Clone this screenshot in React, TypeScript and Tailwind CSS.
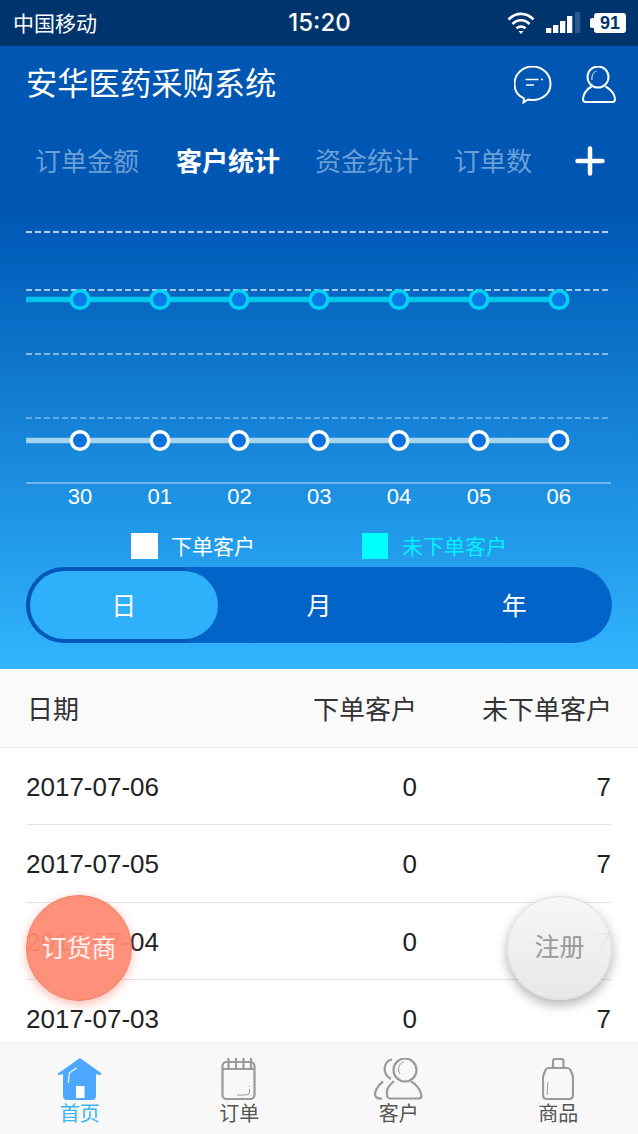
const xs = [80, 160, 239, 319, 399, 479, 559];
const days = ["30", "01", "02", "03", "04", "05", "06"];
const rows = [
  { date: "2017-07-06", placed: 0, idle: 7 },
  { date: "2017-07-05", placed: 0, idle: 7 },
  { date: "2017-07-04", placed: 0, idle: 7 },
  { date: "2017-07-03", placed: 0, idle: 7 },
];

function Chart() {
  return (
    <svg className="block h-[287px] w-[638px]" viewBox="0 198 638 287">
      <g stroke="#fff" strokeWidth="1.6" strokeDasharray="6 3">
        <path d="M26 232H611" opacity="0.95" />
        <path d="M26 290H611" opacity="0.85" />
        <path d="M26 354H611" opacity="0.65" />
        <path d="M26 418H611" opacity="0.45" />
      </g>
      <path d="M26 483H611" stroke="#fff" strokeWidth="1.6" opacity="0.5" />
      <path d="M26 299.500H559" stroke="#00c4ea" strokeWidth="5.5" />
      <path d="M26 440.500H559" stroke="#a6d2f2" strokeWidth="5.5" />
      {xs.map((x) => (
        <g key={x}>
          <circle cx={x} cy="299.500" r="8.750" fill="#0a78e6" stroke="#00d4f4" strokeWidth="3.500" />
          <circle cx={x} cy="440.500" r="8.750" fill="#0a72e0" stroke="#fff" strokeWidth="3.500" />
        </g>
      ))}
    </svg>
  );
}

function HomeIcon() {
  return (
    <svg className="h-[42px] w-[46px]" viewBox="57 1058 46 42">
      <path d="M80 1058L101.500 1073.500Q101.500 1075 100 1075L96 1074V1096Q96 1100 92 1100H67Q63 1100 63 1096V1074L59 1075Q57.500 1075 58 1073.500Z" fill="#4da6ff" />
      <rect x="76" y="1086" width="8.500" height="12" fill="#fff" />
      <path d="M68.300 1083L69.300 1073L76.700 1067.700" fill="none" stroke="#fff" strokeWidth="1.100" />
    </svg>
  );
}

function NoteIcon() {
  return (
    <svg className="h-[42px] w-[36px]" viewBox="221 1058 36 42" fill="none" stroke="#9a9a9a" strokeWidth="2.200">
      <rect x="222.500" y="1062" width="32" height="37" rx="4" />
      <path d="M222.500 1069H254.500M228.500 1058V1068M236 1058V1068M243.500 1058V1068M251 1058V1068" />
      <path d="M237 1095H246Q249.500 1095 249.500 1092V1089" strokeWidth="1" />
      <path d="M249.500 1086V1087" strokeWidth="1" />
    </svg>
  );
}

function PeopleIcon() {
  return (
    <svg className="h-[42px] w-[50px]" viewBox="374 1058 50 42" fill="none" stroke="#9a9a9a" strokeWidth="2.200">
      <circle cx="405" cy="1070" r="11.500" />
      <path d="M394 1081C388 1086 385.500 1092 387.500 1097Q388.500 1098.500 390 1098.500H419Q421.500 1098.500 421.500 1096C421 1090 416 1084 411 1081.500" />
      <path d="M392 1059.500C384 1061 381 1073 391 1079" />
      <path d="M383 1081.500C377 1086 373.500 1093 376 1097Q377.500 1099 382 1098.500" />
      <path d="M400 1074C397 1069 399 1063 404 1062" strokeWidth="1" />
    </svg>
  );
}

function BagIcon() {
  return (
    <svg className="h-[42px] w-[32px]" viewBox="542.500 1058 32 42" fill="none" stroke="#9a9a9a" strokeWidth="2.200">
      <path d="M553.500 1068V1061Q553.500 1059 555.500 1059H562Q564 1059 564 1061V1068" />
      <path d="M549 1068H568Q570 1068 571 1070L573 1075Q573.500 1076.500 573.500 1078V1095Q573.500 1099 569.500 1099H547.500Q543.500 1099 543.500 1095V1078Q543.500 1076.500 544 1075L546 1070Q547 1068 549 1068Z" />
      <path d="M548.300 1082L547.700 1095" strokeWidth="1" />
    </svg>
  );
}

const tabs = [
  { label: "首页", icon: <HomeIcon />, color: "text-[#3cb6ee]" },
  { label: "订单", icon: <NoteIcon />, color: "text-[#555]" },
  { label: "客户", icon: <PeopleIcon />, color: "text-[#555]" },
  { label: "商品", icon: <BagIcon />, color: "text-[#555]" },
];

export default function App() {
  return (
    <div className="relative flex h-[1134px] w-[638px] flex-col overflow-hidden bg-white font-['Liberation_Sans','Noto_Sans_CJK_SC',sans-serif]">
      {/* status bar */}
      <div className="grid h-[46px] shrink-0 grid-cols-3 items-center bg-[#00346c] pl-[13px] pr-[12px] text-white">
        <span className="text-[21px] leading-none">中国移动</span>
        <span className="justify-self-center font-['Inter'] text-[24px] font-medium leading-none">15:20</span>
        <div className="flex items-center justify-self-end">
          <svg className="h-[24px] w-[28px]" viewBox="508 11 28 24" fill="none" stroke="#fff" strokeWidth="2.600">
            <path d="M509.500 19.500C516.500 12 527.500 12 534.500 19.500" />
            <path d="M513.500 24C518.500 19 525.500 19 530.500 24" />
            <path d="M517.500 28.300C520 26 524 26 526.500 28.300" />
            <path d="M522 34L519.500 31H524.500Z" fill="#fff" stroke="none" />
          </svg>
          <svg className="ml-[11px] h-[22px] w-[35px]" viewBox="547 12 35 22" fill="#fff">
            <rect x="547" y="28" width="5.300" height="5" />
            <rect x="554" y="25" width="5.300" height="8" />
            <rect x="561" y="21" width="5.300" height="12" />
            <rect x="568" y="16" width="5.300" height="17" />
            <rect x="576" y="12" width="5.300" height="21" fill="#2b5a92" />
          </svg>
          <div className="ml-[9px] h-[10px] w-[4px] rounded-l-[2px] bg-white" />
          <div className="flex h-[20px] w-[32px] items-center justify-center rounded-[3px] bg-white text-[18px] font-bold leading-none text-[#00346c]">
            91
          </div>
        </div>
      </div>

      {/* blue area */}
      <div className="h-[623px] shrink-0 bg-linear-to-b from-[#0056b3] from-[26%] to-[#32b5ff] text-white">
        <div className="flex h-[78px] items-center justify-between pl-[26px] pr-[22px]">
          <h1 className="text-[31.300px] font-normal leading-none">安华医药采购系统</h1>
          <div className="flex items-center gap-[30px]">
            <svg className="h-[38px] w-[38px]" viewBox="514 65 38 38" fill="none" stroke="#fff" strokeWidth="2">
              <path d="M524 97.500C517 94.500 514.500 89 514.500 83C514.500 73 522.500 65.500 532.500 65.500C542.500 65.500 550.500 73 550.500 83C550.500 92.500 542.500 99 532.500 99Q530 99 528 98.500L523.500 101.500Z" />
              <path d="M525.500 78.500H538.500M541 78.500H543M526 84H534" strokeWidth="1.400" />
            </svg>
            <svg className="h-[38px] w-[34px]" viewBox="582.500 65 34 38" fill="none" stroke="#fff" strokeWidth="2">
              <circle cx="598.500" cy="76" r="10.500" />
              <path d="M592 85.500C586.500 88.500 583.500 94 583.500 98Q583.500 101 586 101H613Q615.500 101 615.500 98C615.500 94 612 88.500 606 85.500" />
              <path d="M592.500 79C592 75 593.500 71.500 597 70" strokeWidth="1" />
            </svg>
          </div>
        </div>

        <div className="flex h-[74px] items-center pl-[35px] text-[26px] leading-none text-[#6b9fd6]">
          <span className="pt-[2px]">订单金额</span>
          <span className="ml-[37px] pt-[2px] font-bold text-white">客户统计</span>
          <span className="ml-[35px] pt-[2px]">资金统计</span>
          <span className="ml-[35px] pt-[2px]">订单数</span>
          <svg className="ml-[43px] h-[30px] w-[30px]" viewBox="0 0 30 30" stroke="#fff" strokeWidth="4.500" strokeLinecap="round">
            <path d="M15 2.500V27.500M2.500 15H27.500" />
          </svg>
        </div>

        <Chart />

        <div className="flex h-[24px] items-center pl-[40px] text-[22px] leading-none">
          {days.map((d) => (
            <span key={d} className="w-[79.800px] text-center">
              {d}
            </span>
          ))}
        </div>

        <div className="mt-[24px] flex h-[26px] items-center pl-[131px] text-[21px] leading-none">
          <span className="h-[26px] w-[27px] bg-white" />
          <span className="ml-[13px] w-[191px]">下单客户</span>
          <span className="h-[26px] w-[26px] bg-[#00ffff]" />
          <span className="ml-[14px] text-[#00f2ff]">未下单客户</span>
        </div>

        <div className="relative mx-[26px] mt-[8px] grid h-[76px] grid-cols-3 items-center overflow-hidden rounded-full bg-[#0264c9] text-[25px] leading-none">
          <div className="absolute inset-y-0 left-0 w-[160px] rounded-l-full bg-[#0056bb]" />
          <div className="absolute inset-y-[4px] left-[4px] w-[188px] rounded-full bg-[#2fb0fb]" />
          <span className="relative pt-[3px] text-center">日</span>
          <span className="relative pt-[3px] text-center">月</span>
          <span className="relative pt-[3px] text-center">年</span>
        </div>
      </div>

      {/* table */}
      <div className="min-h-0 flex-1 overflow-hidden bg-white">
        <div className="flex h-[79px] items-center border-b border-[#e6e6e6] bg-[#fafafa] pl-[27px] pr-[26px] pt-[3px] text-[26px] leading-none text-[#333]">
          <span className="flex-1">日期</span>
          <span className="w-[104px] text-right">下单客户</span>
          <span className="w-[195px] text-right">未下单客户</span>
        </div>
        <div className="pl-[26px] pr-[27px] text-[26px] leading-none text-[#222]">
          {rows.map((r) => (
            <div key={r.date} className="flex h-[77.300px] items-center border-b border-[#e4e4e4] pt-[2px]">
              <span className="flex-1">{r.date}</span>
              <span className="w-[102px] text-right">{r.placed}</span>
              <span className="w-[194px] text-right">{r.idle}</span>
            </div>
          ))}
        </div>
      </div>

      {/* tab bar */}
      <div className="grid h-[93px] shrink-0 grid-cols-4 bg-[#f8f8f8] pt-[17px]">
        {tabs.map((t) => (
          <div key={t.label} className="flex flex-col items-center">
            {t.icon}
            <span className={`mt-[2px] h-[24px] text-[20px] leading-[24px] ${t.color}`}>{t.label}</span>
          </div>
        ))}
      </div>

      {/* floating buttons */}
      <button className="absolute left-[26px] top-[895px] flex h-[106px] w-[106px] items-center justify-center rounded-full border border-[#ee7e68] bg-[#ff8a73]/95 pt-[2px] text-[25px] text-white/90 shadow-[0_3px_10px_rgba(255,120,100,0.5)]">
        订货商
      </button>
      <button className="absolute left-[507px] top-[896px] flex h-[104px] w-[105px] items-center justify-center rounded-full border border-[#dcdcdc] bg-linear-to-b from-[#f6f6f6]/95 to-[#e8e8e8] text-[25px] text-[#999] shadow-[0_5px_12px_rgba(0,0,0,0.3)]">
        注册
      </button>
    </div>
  );
}
